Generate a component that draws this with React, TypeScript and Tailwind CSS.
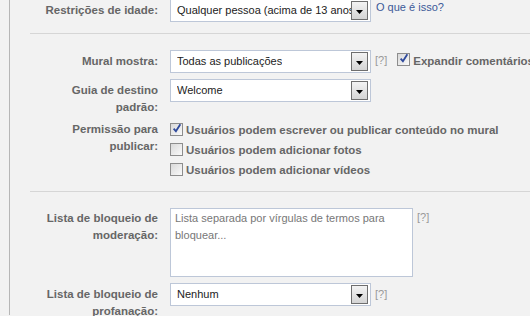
import React from "react";

const FONT = "font-['Liberation_Sans',Arial,sans-serif]";

function Arrow() {
  return (
    <div className="flex h-[19px] w-[17px] shrink-0 items-center justify-center border border-[#6e6e6e] bg-gradient-to-b from-[#f3f3f3] to-[#d4d4d4]">
      <svg width="7" height="4" viewBox="0 0 7 4" className="mt-[2px]">
        <path d="M0 0h7L3.5 4z" fill="#000" />
      </svg>
    </div>
  );
}

function Select({ text }: { text: string }) {
  return (
    <div className="flex h-[23px] w-[201px] shrink-0 items-center justify-between border border-[#bdc7d8] bg-white pl-[6px] pr-[2px]">
      <span className="min-w-0 overflow-hidden whitespace-nowrap text-[11px] leading-[17px] text-[#222]">
        {text}
      </span>
      <Arrow />
    </div>
  );
}

function Checkbox({ checked }: { checked?: boolean }) {
  return (
    <span className="flex h-[13px] w-[13px] shrink-0 items-center justify-center border border-[#8d8d8d] bg-gradient-to-br from-[#d9d9d9] to-[#fafafa]">
      {checked && (
        <svg width="11" height="11" viewBox="0 0 11 11" className="-mt-[2px] ml-[1px]">
          <path d="M1.8 5.6 L4.3 8.4 L9.2 0.8" stroke="#2f4a9c" strokeWidth="2" fill="none" />
        </svg>
      )}
    </span>
  );
}

function Label({ children, pt }: { children: React.ReactNode; pt: string }) {
  return (
    <div className={`w-[148px] shrink-0 whitespace-nowrap text-right text-[11.5px] font-bold leading-[17px] text-[#666] ${pt}`}>
      {children}
    </div>
  );
}

function Help({ className = "" }: { className?: string }) {
  return <span className={`text-[11px] leading-[17px] text-[#999] ${className}`}>[?]</span>;
}

export default function App() {
  return (
    <div className={`h-[316px] w-[530px] overflow-hidden bg-[#f2f2f2] ${FONT}`}>
      <div className="ml-[9px] h-full border-l border-[#b6b6b6]">
        {/* Row 1 */}
        <div className="-mt-px flex gap-[12px]">
          <Label pt="pt-[3px]">Restrições de idade:</Label>
          <Select text="Qualquer pessoa (acima de 13 anos)" />
          <a className="ml-[-8px] pl-[1px] text-[11px] leading-[17px] text-[#3b5998]">O que é isso?</a>
        </div>

        <div className="ml-[20px] mt-[11px] h-px bg-[#d6d6d6]" />

        {/* Row 2 */}
        <div className="mt-[16px] flex gap-[12px]">
          <Label pt="pt-[3px]">Mural mostra:</Label>
          <Select text="Todas as publicações" />
          <div className="ml-[-8px] flex items-center whitespace-nowrap pb-[2px]">
            <Help />
            <span className="ml-[10px] mt-[-2px]">
              <Checkbox checked />
            </span>
            <span className="ml-[3px] mt-[2px] text-[11.5px] font-bold leading-[17px] text-[#666]">Expandir comentários</span>
          </div>
        </div>

        {/* Row 3 */}
        <div className="mt-[6px] flex gap-[12px]">
          <Label pt="pt-[3px]">
            Guia de destino
            <br />
            padrão:
          </Label>
          <Select text="Welcome" />
        </div>

        {/* Row 4 */}
        <div className="mt-[5px] flex gap-[12px]">
          <Label pt="pt-0">
            Permissão para
            <br />
            publicar:
          </Label>
          <div className="flex flex-col">
            {[
              { t: "Usuários podem escrever ou publicar conteúdo no mural", c: true },
              { t: "Usuários podem adicionar fotos", c: false },
              { t: "Usuários podem adicionar vídeos", c: false },
            ].map((r) => (
              <div key={r.t} className="flex h-[20px] items-start gap-[3px] whitespace-nowrap">
                <span className="mt-[2px]">
                  <Checkbox checked={r.c} />
                </span>
                <span className="pt-[1px] text-[11.5px] font-bold leading-[17px] text-[#666]">{r.t}</span>
              </div>
            ))}
          </div>
        </div>

        <div className="ml-[20px] mt-[10px] h-px bg-[#d6d6d6]" />

        {/* Row 5 */}
        <div className="mt-[16px] flex gap-[12px]">
          <Label pt="pt-[2px]">
            Lista de bloqueio de
            <br />
            moderação:
          </Label>
          <div className="h-[69px] w-[243px] shrink-0 border border-[#bdc7d8] bg-white pl-[4px] pr-[20px] pt-[1px] text-[11px] leading-[17px] text-[#777]">
            Lista separada por vírgulas de termos para bloquear...
          </div>
          <Help className="ml-[-8px] pt-px" />
        </div>

        {/* Row 6 */}
        <div className="mt-[6px] flex gap-[12px]">
          <Label pt="pt-[3px]">
            Lista de bloqueio de
            <br />
            profanação:
          </Label>
          <Select text="Nenhum" />
          <Help className="ml-[-8px] pt-[3px]" />
        </div>
      </div>
    </div>
  );
}
